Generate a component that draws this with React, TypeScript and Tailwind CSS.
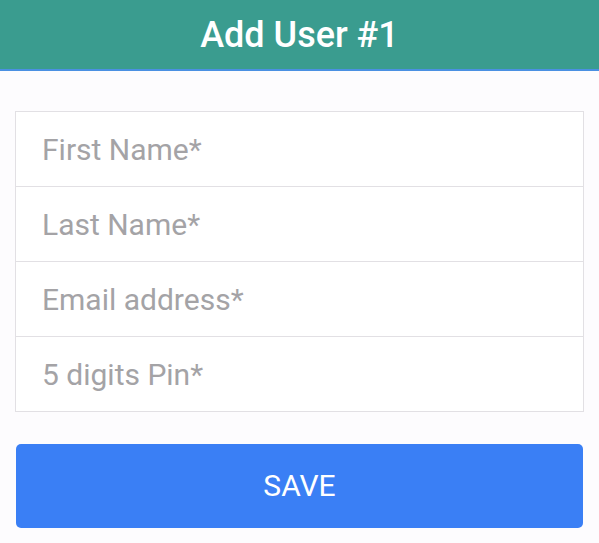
export default function App() {
  const fields = ["First Name*", "Last Name*", "Email address*", "5 digits Pin*"];
  return (
    <div className="w-[599px] h-[543px] bg-[#fdfcfe] flex flex-col" style={{ fontFamily: "Roboto, 'Liberation Sans', sans-serif" }}>
      <div className="h-[71px] bg-[#3a9c8f] border-b-2 border-[#4a90e2] flex items-center justify-center">
        <span className="text-white text-[36px] font-medium leading-none">Add User #1</span>
      </div>
      <div className="px-[15px] pt-[40px]">
        <div className="border border-[#e2e0e4] bg-white">
          {fields.map((f, i) => (
            <div key={f} className={`flex items-center pl-[26px] pt-[2px] ${i > 0 ? "h-[75px] border-t border-[#e2e0e4]" : "h-[74px]"}`}>
              <span className="text-[30px] text-[#a4a3a6] leading-none">{f}</span>
            </div>
          ))}
        </div>
      </div>
      <div className="px-[16px] pt-[32px]">
        <button className="w-full h-[84px] rounded-[5px] bg-[#3a7ff5] text-white text-[30px] leading-none flex items-center justify-center">SAVE</button>
      </div>
    </div>
  );
}
